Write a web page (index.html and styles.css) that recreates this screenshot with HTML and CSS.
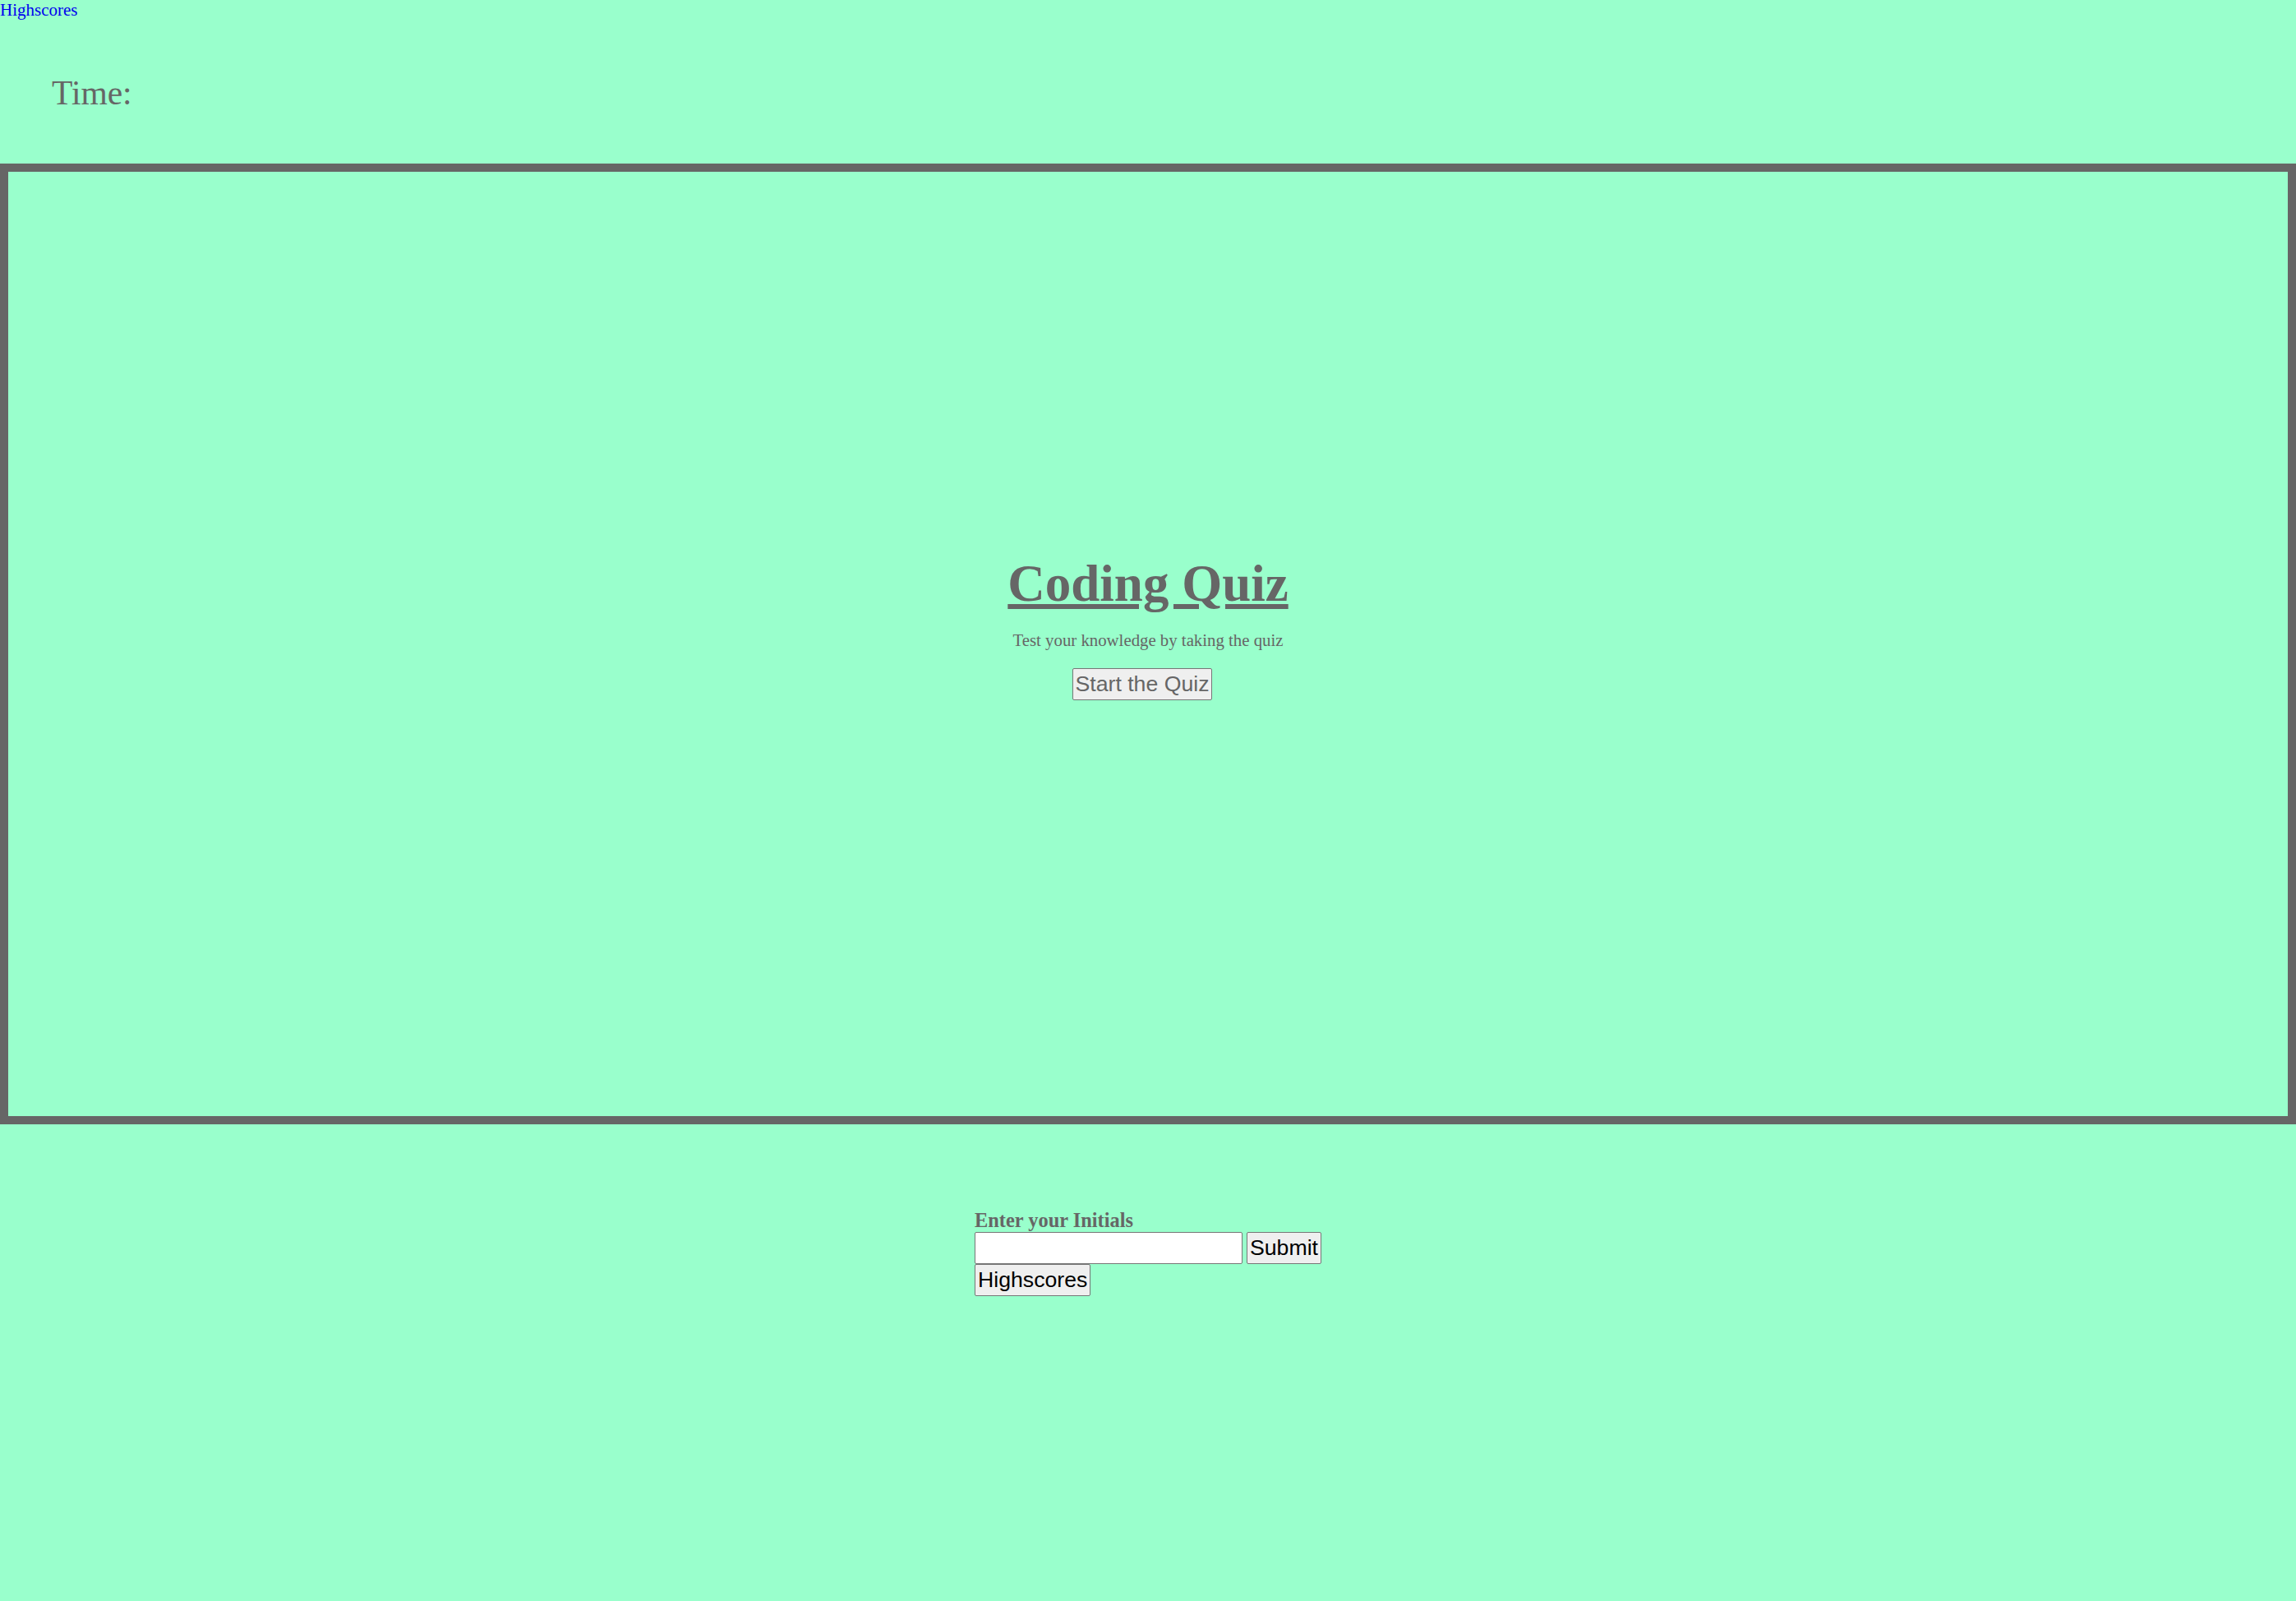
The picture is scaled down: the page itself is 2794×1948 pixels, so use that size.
FILE: index.html
```html
<!DOCTYPE html>
<html lang="en">
<head>
<meta charset="utf-8">
<title>Coding Quiz</title>
<link rel="stylesheet" href="styles.css">
</head>
<body>
  <header class="top">
    <a class="hs-link" href="#">Highscores</a>
    <div class="timer">Time: <span class="time-value"></span></div>
  </header>
  <main class="quiz-box">
    <h1 class="title">Coding Quiz</h1>
    <p class="subtitle">Test your knowledge by taking the quiz</p>
    <button class="btn start-btn" type="button">Start the Quiz</button>
  </main>
  <section class="score-area">
    <form class="score-form">
      <label class="initials-label" for="initials">Enter your Initials</label>
      <div class="score-row">
        <input class="initials-input" id="initials" type="text">
        <button class="btn" type="button">Submit</button>
      </div>
      <div class="score-row">
        <button class="btn" type="button">Highscores</button>
      </div>
    </form>
  </section>
</body>
</html>
```
FILE: styles.css
```css
html {
  background: #99ffcc;
}

body {
  margin: 0;
  background: #99ffcc;
  font-family: "Liberation Serif", "Times New Roman", serif;
  color: #666666;
}

.top {
  display: flex;
  flex-direction: column;
  align-items: flex-start;
}

.hs-link {
  display: block;
  font-size: 21px;
  line-height: 24px;
  color: #0000ee;
  text-decoration: none;
}

.timer {
  margin: 66px 0 62px 63px;
  font-size: 41.5px;
  line-height: 47px;
  color: #666666;
}

.quiz-box {
  height: 1169px;
  border: 10px solid #666666;
  padding-top: 464px;
  box-sizing: border-box;
  display: flex;
  flex-direction: column;
  align-items: center;
}

.title {
  margin: 0;
  font-size: 63px;
  line-height: 74px;
  font-weight: bold;
  text-decoration: underline;
  color: #666666;
}

.subtitle {
  margin: 20px 0 0;
  font-size: 20.8px;
  line-height: 24px;
  color: #666666;
}

.btn {
  height: 39px;
  margin: 0;
  padding: 0 3px;
  border: 1px solid #767676;
  border-radius: 2px;
  background: #efefef;
  font-family: "Liberation Sans", Arial, sans-serif;
  font-size: 26.67px;
  line-height: 37px;
  color: #000000;
  box-sizing: border-box;
}

.start-btn {
  margin: 22px 14px 0 0;
  color: #666666;
}

.score-area {
  display: flex;
  justify-content: center;
  padding: 103px 0 300px;
}

.score-form {
  display: flex;
  flex-direction: column;
  align-items: flex-start;
}

.initials-label {
  display: block;
  font-size: 24.4px;
  line-height: 28px;
  font-weight: bold;
  color: #666666;
}

.score-row {
  display: flex;
  gap: 5px;
}

.initials-input {
  width: 326px;
  height: 39px;
  margin: 0;
  padding: 0 3px;
  border: 1px solid #767676;
  border-radius: 2px;
  background: #ffffff;
  box-sizing: border-box;
  font-family: "Liberation Sans", Arial, sans-serif;
  font-size: 26.67px;
}
```
